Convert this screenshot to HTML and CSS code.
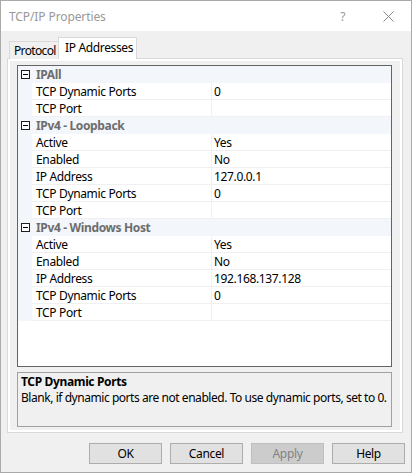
FILE: index.html
```html
<!DOCTYPE html>
<html>
<head>
<meta charset="utf-8">
<link rel="stylesheet" href="styles.css">
</head>
<body>
<div class="window">
  <div class="titlebar">
    <span class="title">TCP/IP Properties</span>
    <span class="help">?</span>
    <svg class="close" width="11" height="11" viewBox="0 0 11 11"><path d="M0.5 0.5 L10.5 10.5 M10.5 0.5 L0.5 10.5" stroke="#8a8a8a" stroke-width="1" fill="none"/></svg>
  </div>
  <div class="client">
    <div class="tabs">
      <div class="tab">Protocol</div>
      <div class="tab active">IP Addresses</div>
    </div>
    <div class="panel">
      <div class="page">
        <div class="grid">
          <div class="row cat"><span class="gut"><span class="box"></span></span><span class="catname">IPAll</span></div>
          <div class="row"><span class="gut"></span><span class="name">TCP Dynamic Ports</span><span class="val">0</span></div>
          <div class="row"><span class="gut"></span><span class="name">TCP Port</span><span class="val"></span></div>
          <div class="row cat"><span class="gut"><span class="box"></span></span><span class="catname">IPv4 - Loopback</span></div>
          <div class="row"><span class="gut"></span><span class="name">Active</span><span class="val">Yes</span></div>
          <div class="row"><span class="gut"></span><span class="name">Enabled</span><span class="val">No</span></div>
          <div class="row"><span class="gut"></span><span class="name">IP Address</span><span class="val">127.0.0.1</span></div>
          <div class="row"><span class="gut"></span><span class="name">TCP Dynamic Ports</span><span class="val">0</span></div>
          <div class="row"><span class="gut"></span><span class="name">TCP Port</span><span class="val"></span></div>
          <div class="row cat"><span class="gut"><span class="box"></span></span><span class="catname">IPv4 - Windows Host</span></div>
          <div class="row"><span class="gut"></span><span class="name">Active</span><span class="val">Yes</span></div>
          <div class="row"><span class="gut"></span><span class="name">Enabled</span><span class="val">No</span></div>
          <div class="row"><span class="gut"></span><span class="name">IP Address</span><span class="val">192.168.137.128</span></div>
          <div class="row"><span class="gut"></span><span class="name">TCP Dynamic Ports</span><span class="val">0</span></div>
          <div class="row"><span class="gut"></span><span class="name">TCP Port</span><span class="val"></span></div>
        </div>
        <div class="desc">
          <div class="desc-title">TCP Dynamic Ports</div>
          <div class="desc-text">Blank, if dynamic ports are not enabled. To use dynamic ports, set to 0.</div>
        </div>
      </div>
    </div>
    <div class="buttons">
      <div class="btn">OK</div>
      <div class="btn">Cancel</div>
      <div class="btn disabled">Apply</div>
      <div class="btn">Help</div>
    </div>
  </div>
</div>
</body>
</html>
```
FILE: styles.css
```css
* { box-sizing: border-box; }
html, body { margin: 0; padding: 0; background: #ffffff; }
body {
  font-family: "Segoe UI", "Noto Sans", sans-serif;
  font-size: 12px;
  letter-spacing: -0.35px;
  color: #000;
}
.window {
  width: 412px;
  height: 473px;
  border: 1px solid #aaaaaa;
  display: flex;
  flex-direction: column;
  background: #f0f0f0;
}
.titlebar {
  height: 30px;
  flex: none;
  background: #ffffff;
  display: flex;
  align-items: center;
  padding: 0 17px 0 8px;
  color: #999999;
}
.title { font-size: 12px; letter-spacing: -0.1px; }
.help { margin-left: auto; margin-right: 38px; font-size: 12px; color: #999; }
.close { display: block; }
.client {
  flex: 1;
  display: flex;
  flex-direction: column;
}
.tabs {
  display: flex;
  align-items: flex-end;
  margin: 6px 0 -1px 8px;
  height: 22px;
  position: relative;
  z-index: 1;
}
.tab {
  height: 18px;
  border: 1px solid #d9d9d9;
  border-bottom: none;
  background: #f0f0f0;
  padding: 0 0 0 4px;
  line-height: 17px;
  width: 50px;
  white-space: nowrap;
  letter-spacing: -0.65px;
}
.tab.active {
  height: 22px;
  background: #ffffff;
  margin-left: -1px;
  width: 79px;
  padding-left: 6px;
  line-height: 19px;
  letter-spacing: -0.35px;
}
.panel {
  margin: 0 8px 0 6px;
  height: 375px;
  border: 1px solid #d9d9d9;
  background: #ffffff;
  padding: 2px;
}
.page {
  height: 100%;
  background: #f0f0f0;
  padding: 4px 8px 3px 7px;
  display: flex;
  flex-direction: column;
  gap: 5px;
}
.grid {
  height: 302px;
  border: 1px solid #646464;
  background: #ffffff;
}
.row {
  display: grid;
  grid-template-columns: 14px 180px 1fr;
  height: 17px;
}
.gut {
  background: #f3f6fb;
  display: flex;
  align-items: center;
}
.name {
  padding: 1px 0 0 4px;
  line-height: 15px;
  border-bottom: 1px solid #f0f0f0;
  border-right: 1px solid #f0f0f0;
  white-space: nowrap;
}
.val {
  padding: 1px 0 0 2px;
  line-height: 15px;
  border-bottom: 1px solid #f0f0f0;
}
.row.cat {
  background: #f3f6fb;
  grid-template-columns: 14px 1fr;
}
.catname {
  padding: 1px 0 0 4px;
  line-height: 16px;
  font-weight: bold;
  color: #6d6d6d;
}
.box {
  width: 9px;
  height: 9px;
  margin-left: 3px;
  border: 1px solid #1e1e1e;
  background: #ffffff;
  position: relative;
}
.box::after {
  content: "";
  position: absolute;
  left: 1px;
  top: 3px;
  width: 5px;
  height: 1px;
  background: #000;
}
.desc {
  height: 55px;
  border: 1px solid #a0a0a0;
  background: #f0f0f0;
  padding: 1px 3px 0 3px;
}
.desc-title { font-weight: bold; line-height: 15px; }
.desc-text { line-height: 18px; white-space: nowrap; letter-spacing: -0.45px; }
.buttons {
  display: flex;
  justify-content: flex-end;
  gap: 8px;
  margin-top: 10px;
  padding-right: 6px;
}
.btn {
  width: 73px;
  height: 21px;
  border: 1px solid #adadad;
  background: #e1e1e1;
  text-align: center;
  line-height: 19px;
}
.btn.disabled {
  background: #cccccc;
  border-color: #bfbfbf;
  color: #838383;
}
```
